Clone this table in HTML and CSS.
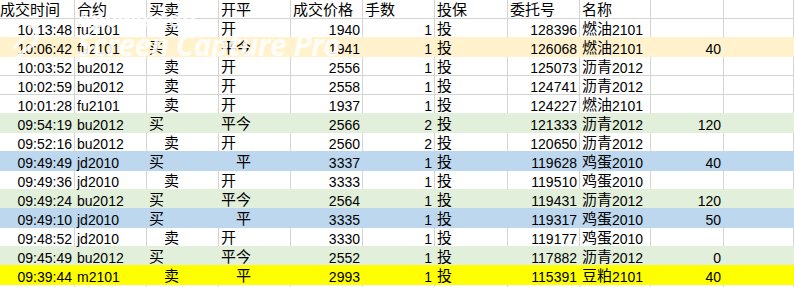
FILE: index.html
```html
<!DOCTYPE html>
<html lang="zh-CN">
<head>
<meta charset="utf-8">
<title>成交记录</title>
<link rel="stylesheet" href="styles.css">
</head>
<body>
<div class="sheet">
  <div class="row">
    <div class="cell"><span class="c">成交时间</span></div>
    <div class="cell"><span class="c">合约</span></div>
    <div class="cell"><span class="c">买卖</span></div>
    <div class="cell"><span class="c">开平</span></div>
    <div class="cell"><span class="c">成交价格</span></div>
    <div class="cell"><span class="c">手数</span></div>
    <div class="cell"><span class="c">投保</span></div>
    <div class="cell"><span class="c">委托号</span></div>
    <div class="cell"><span class="c">名称</span></div>
    <div class="cell"></div>
    <div class="cell"></div>
  </div>

  <div class="row">
    <div class="cell r">10:13:48</div><div class="cell">fu2101</div><div class="cell ind"><span class="c">卖</span></div><div class="cell"><span class="c">开</span></div>
    <div class="cell r">1940</div><div class="cell r">1</div><div class="cell"><span class="c">投</span></div><div class="cell r">128396</div>
    <div class="cell"><span class="c">燃油</span>2101</div><div class="cell r"></div><div class="cell"></div>
  </div>
  <div class="row fill orange">
    <div class="cell r">10:06:42</div><div class="cell">fu2101</div><div class="cell"><span class="c">买</span></div><div class="cell"><span class="c">平今</span></div>
    <div class="cell r">1941</div><div class="cell r">1</div><div class="cell"><span class="c">投</span></div><div class="cell r">126068</div>
    <div class="cell"><span class="c">燃油</span>2101</div><div class="cell r">40</div><div class="cell"></div>
  </div>
  <div class="row">
    <div class="cell r">10:03:52</div><div class="cell">bu2012</div><div class="cell ind"><span class="c">卖</span></div><div class="cell"><span class="c">开</span></div>
    <div class="cell r">2556</div><div class="cell r">1</div><div class="cell"><span class="c">投</span></div><div class="cell r">125073</div>
    <div class="cell"><span class="c">沥青</span>2012</div><div class="cell r"></div><div class="cell"></div>
  </div>
  <div class="row">
    <div class="cell r">10:02:59</div><div class="cell">bu2012</div><div class="cell ind"><span class="c">卖</span></div><div class="cell"><span class="c">开</span></div>
    <div class="cell r">2558</div><div class="cell r">1</div><div class="cell"><span class="c">投</span></div><div class="cell r">124741</div>
    <div class="cell"><span class="c">沥青</span>2012</div><div class="cell r"></div><div class="cell"></div>
  </div>
  <div class="row">
    <div class="cell r">10:01:28</div><div class="cell">fu2101</div><div class="cell ind"><span class="c">卖</span></div><div class="cell"><span class="c">开</span></div>
    <div class="cell r">1937</div><div class="cell r">1</div><div class="cell"><span class="c">投</span></div><div class="cell r">124227</div>
    <div class="cell"><span class="c">燃油</span>2101</div><div class="cell r"></div><div class="cell"></div>
  </div>
  <div class="row fill green">
    <div class="cell r">09:54:19</div><div class="cell">bu2012</div><div class="cell"><span class="c">买</span></div><div class="cell"><span class="c">平今</span></div>
    <div class="cell r">2566</div><div class="cell r">2</div><div class="cell"><span class="c">投</span></div><div class="cell r">121333</div>
    <div class="cell"><span class="c">沥青</span>2012</div><div class="cell r">120</div><div class="cell"></div>
  </div>
  <div class="row">
    <div class="cell r">09:52:16</div><div class="cell">bu2012</div><div class="cell ind"><span class="c">卖</span></div><div class="cell"><span class="c">开</span></div>
    <div class="cell r">2560</div><div class="cell r">2</div><div class="cell"><span class="c">投</span></div><div class="cell r">120650</div>
    <div class="cell"><span class="c">沥青</span>2012</div><div class="cell r"></div><div class="cell"></div>
  </div>
  <div class="row fill blue">
    <div class="cell r">09:49:49</div><div class="cell">jd2010</div><div class="cell"><span class="c">买</span></div><div class="cell ind"><span class="c">平</span></div>
    <div class="cell r">3337</div><div class="cell r">1</div><div class="cell"><span class="c">投</span></div><div class="cell r">119628</div>
    <div class="cell"><span class="c">鸡蛋</span>2010</div><div class="cell r">40</div><div class="cell"></div>
  </div>
  <div class="row">
    <div class="cell r">09:49:36</div><div class="cell">jd2010</div><div class="cell ind"><span class="c">卖</span></div><div class="cell"><span class="c">开</span></div>
    <div class="cell r">3333</div><div class="cell r">1</div><div class="cell"><span class="c">投</span></div><div class="cell r">119510</div>
    <div class="cell"><span class="c">鸡蛋</span>2010</div><div class="cell r"></div><div class="cell"></div>
  </div>
  <div class="row fill green">
    <div class="cell r">09:49:24</div><div class="cell">bu2012</div><div class="cell"><span class="c">买</span></div><div class="cell"><span class="c">平今</span></div>
    <div class="cell r">2564</div><div class="cell r">1</div><div class="cell"><span class="c">投</span></div><div class="cell r">119431</div>
    <div class="cell"><span class="c">沥青</span>2012</div><div class="cell r">120</div><div class="cell"></div>
  </div>
  <div class="row fill blue">
    <div class="cell r">09:49:10</div><div class="cell">jd2010</div><div class="cell"><span class="c">买</span></div><div class="cell ind"><span class="c">平</span></div>
    <div class="cell r">3335</div><div class="cell r">1</div><div class="cell"><span class="c">投</span></div><div class="cell r">119317</div>
    <div class="cell"><span class="c">鸡蛋</span>2010</div><div class="cell r">50</div><div class="cell"></div>
  </div>
  <div class="row">
    <div class="cell r">09:48:52</div><div class="cell">jd2010</div><div class="cell ind"><span class="c">卖</span></div><div class="cell"><span class="c">开</span></div>
    <div class="cell r">3330</div><div class="cell r">1</div><div class="cell"><span class="c">投</span></div><div class="cell r">119177</div>
    <div class="cell"><span class="c">鸡蛋</span>2010</div><div class="cell r"></div><div class="cell"></div>
  </div>
  <div class="row fill green">
    <div class="cell r">09:45:49</div><div class="cell">bu2012</div><div class="cell"><span class="c">买</span></div><div class="cell"><span class="c">平今</span></div>
    <div class="cell r">2552</div><div class="cell r">1</div><div class="cell"><span class="c">投</span></div><div class="cell r">117882</div>
    <div class="cell"><span class="c">沥青</span>2012</div><div class="cell r">0</div><div class="cell"></div>
  </div>
  <div class="row fill yellow">
    <div class="cell r">09:39:44</div><div class="cell">m2101</div><div class="cell ind"><span class="c">卖</span></div><div class="cell ind"><span class="c">平</span></div>
    <div class="cell r">2993</div><div class="cell r">1</div><div class="cell"><span class="c">投</span></div><div class="cell r">115391</div>
    <div class="cell"><span class="c">豆粕</span>2101</div><div class="cell r">40</div><div class="cell"></div>
  </div>
  <div class="row stub">
    <div class="cell"></div><div class="cell"></div><div class="cell"></div><div class="cell"></div>
    <div class="cell"></div><div class="cell"></div><div class="cell"></div><div class="cell"></div>
    <div class="cell"></div><div class="cell"></div><div class="cell"></div>
  </div>

  <div class="watermark">
    <svg class="wm-logo" width="40" height="44" viewBox="0 0 40 44">
      <path d="M10 6 C 22 2, 34 10, 30 22 C 27 30, 16 30, 12 40" fill="none" stroke="rgba(255,255,255,0.85)" stroke-width="4" stroke-linecap="round"/>
      <path d="M8 30 L 20 18" fill="none" stroke="rgba(255,255,255,0.85)" stroke-width="3" stroke-linecap="round"/>
    </svg>
    <div class="wm-text">
      <span class="wm-brand">Apowersoft</span>
      <span class="wm-product">Screen Capture Pro</span>
    </div>
  </div>
</div>
</body>
</html>
```

FILE: styles.css
```css
html, body {
  margin: 0;
  padding: 0;
  background: #ffffff;
  height: 287px;
  overflow: hidden;
}

.sheet {
  position: relative;
  height: 287px;
  overflow: hidden;
  margin-left: -2px;
  font-family: "Liberation Sans", "Noto Sans CJK SC", sans-serif;
  font-size: 14px;
  color: #000000;
}

.row {
  display: grid;
  grid-template-columns: 77px 72px 72px 72px 72px 72px 73px 72px 71px 73px 1fr;
  height: 19px;
  box-sizing: border-box;
  border-bottom: 1px solid #d4d4d4;
}

.row.stub {
  height: 3px;
  border-bottom: none;
}

.cell {
  border-right: 1px solid #d4d4d4;
  padding: 4px 2px 0 2px;
  line-height: 14px;
  white-space: nowrap;
}

.stub .cell {
  padding: 0;
}

.r {
  text-align: right;
}

.ind {
  padding-left: 17px;
}

.c {
  font-family: "Noto Sans CJK SC", sans-serif;
  font-size: 15px;
  line-height: 0;
  vertical-align: 1px;
}

.fill {
  margin-top: -1px;
  height: 20px;
}

.fill .cell {
  border-right-color: transparent;
  padding-top: 5px;
}

.orange {
  background: #fff2cc;
  border-bottom-color: #fff2cc;
}

.green {
  background: #e2efda;
  border-bottom-color: #e2efda;
}

.blue {
  background: #bdd7ee;
  border-bottom-color: #bdd7ee;
}

.yellow {
  background: #ffff00;
  border-bottom-color: #ffff00;
}

.watermark {
  position: absolute;
  left: 8px;
  top: 8px;
  display: flex;
  align-items: flex-start;
  gap: 31px;
  pointer-events: none;
}

.wm-logo {
  margin-top: 10px;
}

.wm-text {
  display: flex;
  flex-direction: column;
  font-family: "Open Sans", "Liberation Sans", sans-serif;
  color: rgba(255, 255, 255, 0.9);
}

.wm-brand {
  font-size: 21px;
  line-height: 22px;
  font-weight: 700;
}

.wm-product {
  font-size: 30px;
  line-height: 30px;
  font-style: italic;
  font-weight: 700;
  letter-spacing: -0.5px;
}
```
